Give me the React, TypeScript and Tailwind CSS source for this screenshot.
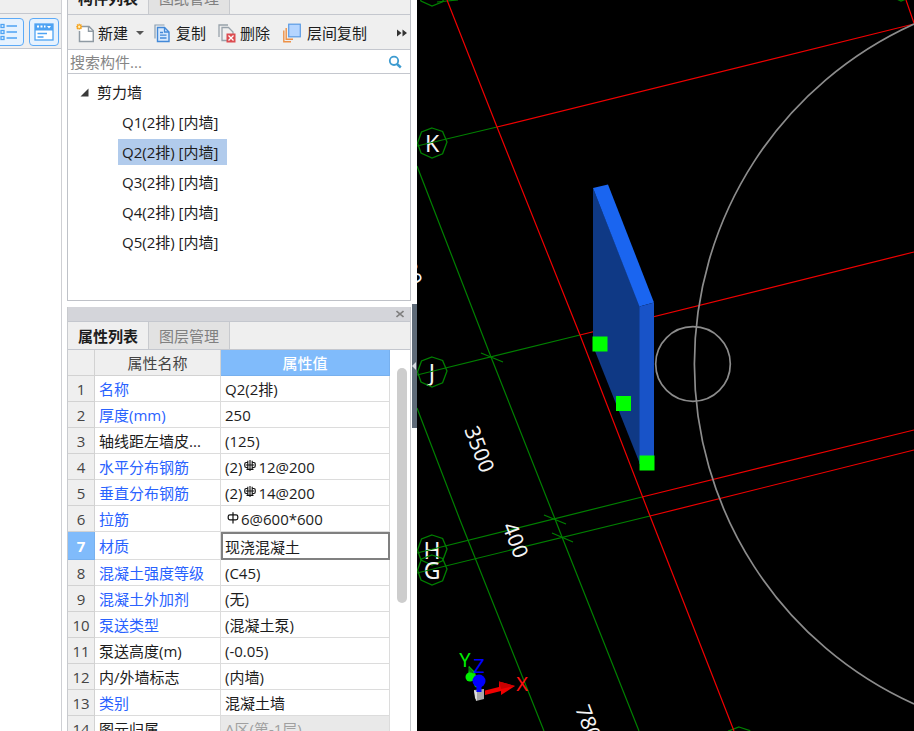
import { useState } from "react";

const walls = ["Q1(2排) [内墙]", "Q2(2排) [内墙]", "Q3(2排) [内墙]", "Q4(2排) [内墙]", "Q5(2排) [内墙]"];

type Row = {
  name: string;
  value: string;
  link?: boolean;
  prefix?: string;
  rebar?: "plain" | "ribbed";
  muted?: boolean;
};

const rows: Row[] = [
  { name: "名称", value: "Q2(2排)", link: true },
  { name: "厚度(mm)", value: "250", link: true },
  { name: "轴线距左墙皮...", value: "(125)" },
  { name: "水平分布钢筋", prefix: "(2)", rebar: "ribbed", value: "12@200", link: true },
  { name: "垂直分布钢筋", prefix: "(2)", rebar: "ribbed", value: "14@200", link: true },
  { name: "拉筋", rebar: "plain", value: "6@600*600", link: true },
  { name: "材质", value: "现浇混凝土", link: true },
  { name: "混凝土强度等级", value: "(C45)", link: true },
  { name: "混凝土外加剂", value: "(无)", link: true },
  { name: "泵送类型", value: "(混凝土泵)", link: true },
  { name: "泵送高度(m)", value: "(-0.05)" },
  { name: "内/外墙标志", value: "(内墙)" },
  { name: "类别", value: "混凝土墙", link: true },
  { name: "图元归属", value: "A区(第-1层)", muted: true },
];

function RebarMark({ kind }: { kind: "plain" | "ribbed" }) {
  return (
    <svg viewBox="0 0 12 12" className="mx-0.5 mb-1 inline-block h-3 w-3" fill="none" stroke="#111" strokeWidth="1.2" aria-hidden="true">
      {kind === "plain" ? (
        <>
          <rect x="1.2" y="2.8" width="9.6" height="5" rx="1.8" />
          <path d="M6 0.3V11.5" />
        </>
      ) : (
        <>
          <path d="M3.8 2.5H2.2Q0.8 2.500 0.8 4V6Q0.8 7.500 2.2 7.500H3.8M8.200 2.500H9.800Q11.200 2.500 11.200 4V6Q11.200 7.500 9.800 7.500H8.200" />
          <path d="M6 0V11M3.8 0.800V9.200M8.200 0.800V9.200M2 5H10M2.500 9.400H9.500" strokeWidth="1.100" />
        </>
      )}
    </svg>
  );
}

function NewIcon() {
  return (
    <svg viewBox="0 0 18 20" className="h-5 w-[18px]" aria-hidden="true">
      <path d="M5 3.500H13L17.300 7.800V18.500H3.500V8" fill="#fff" stroke="#8f9aa3" strokeWidth="1.500" />
      <path d="M12.500 3.500V8.300H17" fill="none" stroke="#8f9aa3" strokeWidth="1.400" />
      <path d="M3.200 0.800V6.600M0.300 3.700H6.100M1 1.500L5.400 5.900M5.400 1.500L1 5.900" stroke="#f6a11a" strokeWidth="1.400" />
      <circle cx="3.200" cy="3.700" r="1.200" fill="#fff3c0" />
    </svg>
  );
}

function CopyIcon() {
  return (
    <svg viewBox="0 0 16 20" className="h-5 w-4" fill="none" aria-hidden="true">
      <path d="M1 15.5V2H10.5" stroke="#8aa0b4" strokeWidth="1.2" />
      <path d="M3.500 4.500H10.500L15 9V18.500H3.500Z" fill="#d7e9fd" stroke="#4389d8" strokeWidth="1.4" />
      <path d="M10.500 4.500V9H15M6 9.500H9M6 12.200H12.500M6 15H12.500" stroke="#4389d8" strokeWidth="1.3" />
    </svg>
  );
}

function DeleteIcon() {
  return (
    <svg viewBox="0 0 18 20" className="h-5 w-[18px]" fill="none" aria-hidden="true">
      <path d="M1 14V2H10M9 17.500H4V4.500H10.500L15 9V11" stroke="#98a2ab" strokeWidth="1.3" />
      <rect x="8.500" y="10.500" width="9" height="9" fill="#dc4b50" />
      <path d="M10.500 12.500L15.500 17.500M15.500 12.500L10.500 17.500" stroke="#fff" strokeWidth="1.3" />
    </svg>
  );
}

function LayerIcon() {
  return (
    <svg viewBox="0 0 18 20" className="h-5 w-[18px]" fill="none" aria-hidden="true">
      <path d="M0.800 7.500V18.700H8M3.200 5V16.300H10" stroke="#ee9147" strokeWidth="1.4" />
      <rect x="5.700" y="1.200" width="11.600" height="12.600" fill="#b5d5ff" stroke="#5b9be4" strokeWidth="1.2" />
    </svg>
  );
}

function Bubble({ x, y, label }: { x: number; y: number; label?: string }) {
  return (
    <g transform={`translate(${x} ${y})`}>
      {label && (
        <text x="0" y="9" textAnchor="middle" fontSize="23" fill="#f4f4f4">
          {label}
        </text>
      )}
      <path d="M0-15L10.600-11.500L15-1L10.600 10.800L0 15L-11 10L-14.500 0L-10.500-11Z" fill="none" stroke="#008000" strokeWidth="1.300" />
    </g>
  );
}

function Dimension({ x, y, text }: { x: number; y: number; text: string }) {
  return (
    <text transform={`translate(${x} ${y}) rotate(69)`} y="8" textAnchor="middle" fontSize="21" fill="#f4f4f4">
      {text}
    </text>
  );
}

function Viewport() {
  return (
    <svg viewBox="417 0 497 731" preserveAspectRatio="xMinYMin slice" className="block h-full w-full font-['Noto_Sans',sans-serif]" role="img" aria-label="三维视图">
      <Bubble x={432} y={-9} />
      <Bubble x={432} y={143} label="K" />
      <Bubble x={432} y={372} label="J" />
      <Bubble x={432} y={550} label="H" />
      <Bubble x={432} y={570} label="G" />
      <Bubble x={739} y={742} />
      <Bubble x={901} y={-14} />

      <g stroke="#008000" strokeWidth="1.2" fill="none">
        <path d="M417 146L497 127M417 375L580 335M417 553L642 497M417 573L650 516" />
        <path d="M417 166L491 357L555 519L562 537L639 731M417 408L460 520L544 731" />
        <path d="M481 353L503 362M544 515L566 524M552 533L573 542M437 2L458 0" />
      </g>
      <g stroke="#f00000" strokeWidth="1.2" fill="none">
        <path d="M447 0L497 127L580 335L650 516L734 731" />
        <path d="M497 127L914 24M906 0L914 23M580 335L914 252M642 497L914 430M650 516L914 450" />
      </g>
      <g stroke="#8c8c8c" strokeWidth="1.700" fill="none">
        <path d="M914 24A373 373 0 0 0 914 704" />
        <circle cx="693" cy="364" r="37.300" />
      </g>

      <path d="M593 188L640 306V464L593 346Z" fill="#0f3985" />
      <path d="M593 188L608 184.500L654 302.500L639.500 306.500Z" fill="#1a65f0" />
      <path d="M639.500 306.500L654 302.500V460L639.500 464Z" fill="#1853c8" />
      <g fill="#00ff00">
        <rect x="592.500" y="336.500" width="15" height="15" />
        <rect x="616" y="396" width="15" height="15" />
        <rect x="639.500" y="455.500" width="15" height="15" />
      </g>

      <Dimension x={408} y={262} text="3500" />
      <Dimension x={480} y={449} text="3500" />
      <Dimension x={516} y={540} text="400" />
      <Dimension x={591} y={728} text="7800" />

      <path d="M468 678L469 666L475 672L479 688L475 687L473 681Z" fill="#00e000" />
      <path d="M468 666L475 673L470 674Z" fill="#087a08" />
      <circle cx="470" cy="677" r="4.500" fill="#00f000" />
      <path d="M474 690L484 689L484 699L476 701Z" fill="#a8a8a8" />
      <path d="M474 690L477 692L477 701L475 698Z" fill="#dedede" />
      <path d="M485 690.500L499 687V681.500L515 686L501 695V691L485 695Z" fill="#f00000" />
      <path d="M499 681.500L515 686L501 689Z" fill="#c80000" />
      <path d="M476.500 680H481.500V692H476.500Z" fill="#0000ff" />
      <circle cx="479" cy="681" r="6.500" fill="#0000ff" />
      <g fontSize="20" textAnchor="middle">
        <text x="465" y="667" fill="#00f000">Y</text>
        <text x="479" y="673" fill="#0000ff">Z</text>
        <text x="522" y="691" fill="#ff1010">X</text>
      </g>
    </svg>
  );
}

export default function App() {
  const [wall, setWall] = useState(1);
  const [material, setMaterial] = useState("现浇混凝土");
  const [query, setQuery] = useState("");

  return (
    <div className="flex h-screen overflow-hidden bg-white font-['Open_Sans','Noto_Sans_CJK_SC',sans-serif] text-[15px] leading-5 text-[#1c1c1c]">
      <aside className="flex w-[62px] shrink-0 flex-col overflow-hidden border-r border-[#cfd0d4] bg-white">
        <div className="h-3.5 shrink-0 border-b border-[#c4c7ce] bg-[#efefef]" />
        <div className="flex h-[35px] shrink-0 items-center justify-end gap-[5px] border-b border-[#c4c7ce] bg-[#efefef] pr-0.5 pt-0.5">
          <button type="button" aria-label="列表" className="flex h-7 w-[30px] shrink-0 items-center justify-center rounded border border-[#5caaf7] bg-[#e6f2fe]">
            <svg viewBox="0 0 18 18" className="h-[18px] w-[18px]" fill="none" stroke="#4ea3f3" strokeWidth="1.3" aria-hidden="true">
              <path d="M6.500 3H17M6.500 9H17M6.500 15H17" />
              <rect x="1" y="1.500" width="3" height="3" />
              <rect x="1" y="7.500" width="3" height="3" />
              <rect x="1" y="13.500" width="3" height="3" />
            </svg>
          </button>
          <button type="button" aria-label="属性" className="flex h-7 w-[30px] shrink-0 items-center justify-center rounded border border-[#5caaf7] bg-[#e6f2fe]">
            <svg viewBox="0 0 20 18" className="h-[18px] w-5" fill="none" aria-hidden="true">
              <rect x="1" y="1" width="18" height="16" fill="#fff" stroke="#4ea3f3" strokeWidth="1.300" />
              <path d="M1 1H19V7.500H1Z" fill="#4ea3f3" />
              <path d="M3 3.500H5M6.500 3.500H8.500M10 3.500H11.500" stroke="#fff" strokeWidth="2" />
              <path d="M13 3H17L15 5.500Z" fill="#fff" />
              <path d="M3.500 10.500H13M3.500 14H9.500" stroke="#4ea3f3" strokeWidth="1.300" />
            </svg>
          </button>
        </div>
      </aside>

      <main className="ml-[5px] flex w-[344px] shrink-0 flex-col">
        <section className="flex h-[301px] shrink-0 flex-col border-x border-b border-[#bfc2c8]">
          <div role="tablist" className="flex h-[15px] shrink-0 items-end overflow-hidden border-b border-[#c4c7ce] bg-[#efefef]">
            <button role="tab" aria-selected="true" type="button" className="h-7 w-20 shrink-0 pb-1 font-bold leading-4">构件列表</button>
            <button role="tab" aria-selected="false" type="button" className="h-7 w-[82px] shrink-0 border-x border-[#c8cace] bg-[#e2e2e2] pb-1 leading-4 text-[#808080]">图纸管理</button>
          </div>
          <div className="flex h-[35px] shrink-0 items-center border-b border-[#c4c7ce] bg-[#efefef] pl-2 pr-[3px] pt-0.5">
            <button type="button" className="flex w-[78px] items-center gap-1">
              <NewIcon />
              新建
              <span className="ml-1 border-x-4 border-t-4 border-x-transparent border-t-[#555]" />
            </button>
            <button type="button" className="flex w-16 items-center gap-1.5">
              <CopyIcon />
              复制
            </button>
            <button type="button" className="flex w-[65px] items-center gap-1">
              <DeleteIcon />
              删除
            </button>
            <button type="button" className="flex items-center gap-1.5">
              <LayerIcon />
              层间复制
            </button>
            <button type="button" aria-label="更多" className="ml-auto">
              <svg viewBox="0 0 10 8" className="h-2 w-2.5" fill="#333" aria-hidden="true">
                <path d="M0 0.500L4.500 4L0 7.500ZM5.500 0.500L10 4L5.500 7.500Z" />
              </svg>
            </button>
          </div>
          <div className="flex h-6 shrink-0 items-center border-b border-[#c4c7ce] pl-0.5 pr-2">
            <input aria-label="搜索构件" value={query} onChange={(e) => setQuery(e.target.value)} placeholder="搜索构件..." className="min-w-0 flex-1 outline-none placeholder:text-[#868686]" />
            <button type="button" aria-label="搜索">
              <svg viewBox="0 0 14 14" className="h-3.5 w-3.5" fill="none" stroke="#3d9bd0" aria-hidden="true">
                <circle cx="6" cy="5.800" r="4.200" strokeWidth="1.800" />
                <path d="M9 9L12.800 12.500" strokeWidth="2.400" />
              </svg>
            </button>
          </div>
          <div className="pt-[3px]">
            <button type="button" aria-expanded="true" className="flex h-[30px] items-center gap-2 pl-3">
              <svg viewBox="0 0 9 9" className="h-[9px] w-[9px]" aria-hidden="true">
                <path d="M8.500 0.500V8.500H0.500Z" fill="#3a3a3a" />
              </svg>
              剪力墙
            </button>
            <ul className="pl-[50px]">
              {walls.map((w, i) => (
                <li key={w} className="flex h-[30px] items-center">
                  <button type="button" onClick={() => setWall(i)} className={i === wall ? "h-[26px] w-[109px] bg-[#b1cbec] px-1 text-left" : "h-[26px] w-[109px] px-1 text-left"}>
                    {w}
                  </button>
                </li>
              ))}
            </ul>
          </div>
        </section>

        <section className="mt-1.5 flex min-h-0 flex-1 flex-col border-x border-[#c8cace]">
          <div className="flex h-[15px] shrink-0 items-center justify-end border-b border-[#c4c7ce] bg-[#d4d5da] pr-1.5">
            <button type="button" aria-label="关闭">
              <svg viewBox="0 0 8 8" className="h-2 w-2" stroke="#808080" strokeWidth="1.600" aria-hidden="true">
                <path d="M0.500 1L7.500 7M7.500 1L0.500 7" />
              </svg>
            </button>
          </div>
          <div role="tablist" className="flex h-7 shrink-0 border-b border-[#c4c7ce] bg-[#efefef]">
            <button role="tab" aria-selected="true" type="button" className="w-20 font-bold">属性列表</button>
            <button role="tab" aria-selected="false" type="button" className="w-[82px] border-x border-[#c8cace] bg-[#e2e2e2] text-[#808080]">图层管理</button>
          </div>
          <div className="flex min-h-0 flex-1 overflow-hidden">
            <div className="min-w-0 flex-1">
              <table className="w-full table-fixed border-separate border-spacing-0">
                <colgroup>
                  <col className="w-[27px]" />
                  <col className="w-[126px]" />
                  <col />
                </colgroup>
                <thead>
                  <tr className="h-[26px]">
                    <th aria-label="序号" className="border-b border-r border-[#d2d2d2] bg-[#efefef] p-0" />
                    <th className="border-b border-r border-[#d2d2d2] bg-[#efefef] p-0 font-normal text-[#444]">属性名称</th>
                    <th className="border-b border-r border-[#77b0ee] bg-[#80bbfb] p-0 font-medium text-white">属性值</th>
                  </tr>
                </thead>
                <tbody>
                  {rows.map((r, i) => {
                    const active = i === 6;
                    return (
                      <tr key={r.name} className={active ? "h-7" : "h-[26px]"}>
                        <th scope="row" className={active ? "border-b border-r border-[#77b0ee] bg-[#80bbfb] p-0 text-white" : "border-b border-r border-[#d2d2d2] bg-[#efefef] p-0 font-normal text-[#444]"}>
                          {i + 1}
                        </th>
                        <td className={r.link ? "whitespace-nowrap border-b border-r border-[#dcdcdc] p-0 pl-1 text-[#2962ff]" : "whitespace-nowrap border-b border-r border-[#dcdcdc] p-0 pl-1"}>{r.name}</td>
                        {active ? (
                          <td className="p-0">
                            <input aria-label={r.name} value={material} onChange={(e) => setMaterial(e.target.value)} className="block h-7 w-full border-2 border-[#808080] pl-0.5 outline-none" />
                          </td>
                        ) : (
                          <td className={r.muted ? "whitespace-nowrap border-b border-r border-[#dcdcdc] bg-[#e9e9e9] p-0 pl-1 text-[#a0a0a0]" : "whitespace-nowrap border-b border-r border-[#dcdcdc] p-0 pl-1"}>
                            {r.prefix}
                            {r.rebar && <RebarMark kind={r.rebar} />}
                            {r.value}
                          </td>
                        )}
                      </tr>
                    );
                  })}
                </tbody>
              </table>
            </div>
            <div className="w-5 shrink-0 pl-[7px] pt-[18px]">
              <div className="h-[235px] w-2.5 rounded-full bg-[#cdcdcd]" />
            </div>
          </div>
        </section>
      </main>

      <div className="flex w-1.5 shrink-0 items-center justify-end">
        <button type="button" aria-label="收起面板" className="flex h-[124px] w-[5px] items-center bg-[#5f6b78]">
          <span className="border-y-4 border-r-4 border-y-transparent border-r-[#d5dae0]" />
        </button>
      </div>

      <div className="min-w-0 flex-1 overflow-hidden bg-black">
        <Viewport />
      </div>
    </div>
  );
}
